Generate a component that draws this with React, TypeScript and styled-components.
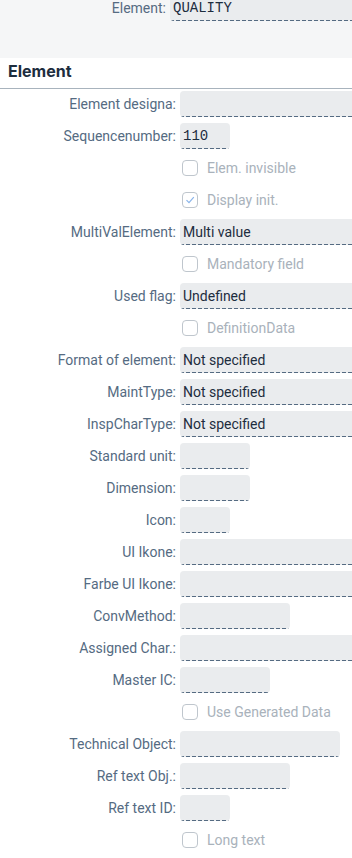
import React from "react";
import styled, { createGlobalStyle } from "styled-components";

const Global = createGlobalStyle`
  html, body { margin: 0; padding: 0; background: #ffffff; }
  body { font-family: Roboto, "Noto Sans", Arial, sans-serif; overflow: hidden; }
`;

const Page = styled.div`
  width: 352px;
  height: 858px;
  overflow: hidden;
  background: #ffffff;
`;

const Header = styled.div`
  height: 58px;
  background: #f5f6f7;
  overflow: hidden;
`;

const HeaderRow = styled.div`
  display: grid;
  grid-template-columns: 166px 1fr;
  column-gap: 4px;
  align-items: center;
  margin-top: -5px;
`;

const SectionTitle = styled.div`
  height: 30px;
  padding: 0 0 0 8px;
  box-sizing: border-box;
  display: flex;
  align-items: center;
  padding-bottom: 4px;
  font-family: Inter, Roboto, Arial, sans-serif;
  font-size: 16px;
  font-weight: 700;
  color: #1d2d3e;
  border-bottom: 1px solid #a8b3bd;
  height: 31px;
`;

const Form = styled.div`
  display: grid;
  grid-template-columns: 176px 1fr;
  column-gap: 4px;
  row-gap: 6px;
  grid-auto-rows: 26px;
  padding-top: 2px;
  align-items: center;
`;

const Label = styled.div`
  text-align: right;
  font-size: 14px;
  color: #556b82;
  white-space: nowrap;
`;

const Field = styled.div<{ $w?: number; $mono?: boolean }>`
  box-sizing: border-box;
  height: 26px;
  width: ${(p) => (p.$w ? `${p.$w}px` : "calc(100% + 8px)")};
  background-color: #eaecee;
  background-image: repeating-linear-gradient(
    to right,
    #556b82 0px,
    #556b82 4px,
    transparent 4px,
    transparent 6px
  );
  background-size: 100% 1px;
  background-position: 0 100%;
  background-repeat: no-repeat;
  border-radius: 4px;
  padding: 0 3px;
  display: flex;
  align-items: center;
  font-family: ${(p) =>
    p.$mono ? '"Liberation Mono", "DejaVu Sans Mono", monospace' : 'Roboto, "Noto Sans", Arial, sans-serif'};
  font-size: 14px;
  color: #1d2d3e;
  white-space: nowrap;
  overflow: hidden;
`;

const CheckRow = styled.div`
  grid-column: 2;
  display: flex;
  align-items: center;
  gap: 9px;
  padding-left: 2px;
  font-size: 14px;
  color: #a9b2bb;
`;

const Box = styled.span`
  box-sizing: border-box;
  width: 16px;
  height: 16px;
  border: 1px solid #bfc6cd;
  border-radius: 4px;
  display: flex;
  align-items: center;
  justify-content: center;
  background: #ffffff;
`;

type Item =
  | { kind: "field"; label: string; value?: string; w?: number; mono?: boolean }
  | { kind: "check"; label: string; checked?: boolean };

const items: Item[] = [
  { kind: "field", label: "Element designa:" },
  { kind: "field", label: "Sequencenumber:", value: "110", w: 50, mono: true },
  { kind: "check", label: "Elem. invisible" },
  { kind: "check", label: "Display init.", checked: true },
  { kind: "field", label: "MultiValElement:", value: "Multi value" },
  { kind: "check", label: "Mandatory field" },
  { kind: "field", label: "Used flag:", value: "Undefined" },
  { kind: "check", label: "DefinitionData" },
  { kind: "field", label: "Format of element:", value: "Not specified" },
  { kind: "field", label: "MaintType:", value: "Not specified" },
  { kind: "field", label: "InspCharType:", value: "Not specified" },
  { kind: "field", label: "Standard unit:", w: 70 },
  { kind: "field", label: "Dimension:", w: 70 },
  { kind: "field", label: "Icon:", w: 50 },
  { kind: "field", label: "UI Ikone:" },
  { kind: "field", label: "Farbe UI Ikone:" },
  { kind: "field", label: "ConvMethod:", w: 110 },
  { kind: "field", label: "Assigned Char.:" },
  { kind: "field", label: "Master IC:", w: 90 },
  { kind: "check", label: "Use Generated Data" },
  { kind: "field", label: "Technical Object:", w: 160 },
  { kind: "field", label: "Ref text Obj.:", w: 110 },
  { kind: "field", label: "Ref text ID:", w: 50 },
  { kind: "check", label: "Long text" },
];

export default function App() {
  return (
    <Page>
      <Global />
      <Header>
        <HeaderRow>
          <Label>Element:</Label>
          <Field $mono>QUALITY</Field>
        </HeaderRow>
      </Header>
      <SectionTitle>Element</SectionTitle>
      <Form>
        {items.map((it, i) =>
          it.kind === "field" ? (
            <React.Fragment key={i}>
              <Label>{it.label}</Label>
              <Field $w={it.w} $mono={it.mono}>
                {it.value}
              </Field>
            </React.Fragment>
          ) : (
            <CheckRow key={i}>
              <Box>
                {it.checked && (
                  <svg width="12" height="12" viewBox="0 0 12 12">
                    <path d="M2.5 6.2 L5 8.7 L9.8 3.2" fill="none" stroke="#89b4ea" strokeWidth="1.2" />
                  </svg>
                )}
              </Box>
              {it.label}
            </CheckRow>
          )
        )}
      </Form>
    </Page>
  );
}
